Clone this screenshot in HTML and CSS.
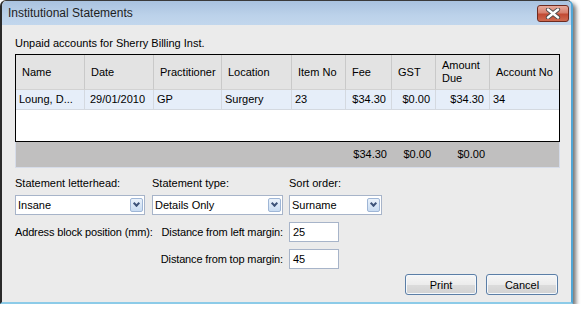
FILE: index.html
```html
<!DOCTYPE html>
<html lang="en">
<head>
  <meta charset="UTF-8">
  <meta name="viewport" content="width=device-width, initial-scale=1.0">
  <title>Institutional Statements</title>
  <link rel="stylesheet" href="styles.css">
</head>
<body>
<div class="window">
  <div class="titlebar">
    <span class="title">Institutional Statements</span>
    <button class="close">
      <svg width="16" height="11" viewBox="0 0 16 11">
        <path d="M3 1.5 L13 9.5 M13 1.5 L3 9.5" stroke="#4a4a4a" stroke-width="4.2" stroke-linecap="round"/>
        <path d="M3 1.5 L13 9.5 M13 1.5 L3 9.5" stroke="#ffffff" stroke-width="2.4" stroke-linecap="round"/>
      </svg>
    </button>
  </div>

  <div class="content">
    <div class="caption">Unpaid accounts for Sherry Billing Inst.</div>

    <div class="grid-frame">
      <div class="grid">
        <div class="row head">
          <div class="cell">Name</div>
          <div class="cell">Date</div>
          <div class="cell">Practitioner</div>
          <div class="cell">Location</div>
          <div class="cell">Item No</div>
          <div class="cell">Fee</div>
          <div class="cell">GST</div>
          <div class="cell">Amount Due</div>
          <div class="cell">Account No</div>
        </div>
        <div class="row data">
          <div class="cell">Loung, D...</div>
          <div class="cell">29/01/2010</div>
          <div class="cell">GP</div>
          <div class="cell">Surgery</div>
          <div class="cell">23</div>
          <div class="cell num">$34.30</div>
          <div class="cell num">$0.00</div>
          <div class="cell num">$34.30</div>
          <div class="cell">34</div>
        </div>
      </div>
      <div class="row totals">
        <div class="cell"></div>
        <div class="cell"></div>
        <div class="cell"></div>
        <div class="cell"></div>
        <div class="cell"></div>
        <div class="cell num">$34.30</div>
        <div class="cell num">$0.00</div>
        <div class="cell num">$0.00</div>
        <div class="cell"></div>
      </div>
    </div>

    <div class="choices">
      <div class="field f1">
        <label>Statement letterhead:</label>
        <div class="combo w1"><span>Insane</span><i class="drop"></i></div>
      </div>
      <div class="field f2">
        <label>Statement type:</label>
        <div class="combo w2"><span>Details Only</span><i class="drop"></i></div>
      </div>
      <div class="field f3">
        <label>Sort order:</label>
        <div class="combo w3"><span>Surname</span><i class="drop"></i></div>
      </div>
    </div>

    <div class="margins">
      <span class="lbl">Address block position (mm):</span>
      <span class="lbl right">Distance from left margin:</span>
      <div class="edit">25</div>
      <span></span>
      <span class="lbl right">Distance from top margin:</span>
      <div class="edit">45</div>
    </div>

    <div class="actions">
      <button class="btn">Print</button>
      <button class="btn">Cancel</button>
    </div>
  </div>
</div>
</body>
</html>
```

FILE: styles.css
```css
body {
  margin: 0;
  padding: 0;
  background: #ffffff;
  font-family: "Liberation Sans", Arial, sans-serif;
  font-size: 11px;
  color: #000;
}
.window {
  width: 569px;
  height: 301px;
  background: #ebebeb;
  border-left: 2px solid #2a2a2a;
  border-top: 1px solid #3a3a3a;
  border-right: 2px solid #4fa6d6;
  border-bottom: 2px solid #8ccbe8;
  border-radius: 6px 6px 0 0;
  box-shadow: 3px 3px 4px rgba(0,0,0,0.55);
}
.titlebar {
  height: 24px;
  display: flex;
  align-items: center;
  justify-content: space-between;
  padding: 0 2px 0 6px;
  background: linear-gradient(#a9c2df, #bcd2ea 60%, #c2d7ed);
  border-radius: 5px 5px 0 0;
}
.title {
  font-family: "Liberation Sans", Arial, sans-serif;
  font-size: 12px;
  color: #1e1e1e;
}
.close {
  width: 32px;
  height: 17px;
  margin-top: 1px;
  padding: 0;
  border: 1px solid #6e2b20;
  border-radius: 3px;
  background: linear-gradient(#e7aa9c, #d7806d 45%, #c24a33 55%, #cf6a4f);
  display: flex;
  align-items: center;
  justify-content: center;
}
.content {
  padding: 11px 10px 0 13px;
}
.caption { height: 14px; line-height: 14px; margin-bottom: 4px; }

.grid-frame { width: 545px; }
.grid {
  border: 1px solid #000;
  background: #fff;
  height: 86px;
}
.row {
  display: grid;
  grid-template-columns: 69px 69px 68px 70px 54px 46px 44px 54px 69px;
}
.head { height: 35px; background: #e3e3e3; }
.head .cell {
  border-right: 1px solid #c9c9c9;
  border-bottom: 1px solid #d2d2d2;
  padding: 0 4px 0 6px;
  display: flex;
  align-items: center;
  line-height: 13px;
}
.head .cell:last-child { border-right: none; }
.data { height: 20px; background: #e6eef9; }
.data .cell {
  border-right: 1px solid #d4d9e0;
  border-bottom: 1px solid #d4d9e0;
  padding: 0 4px 0 3px;
  line-height: 19px;
  white-space: nowrap;
}
.data .cell:nth-child(2) { padding-left: 5px; }
.data .cell:last-child { border-right: none; }
.cell.num { text-align: right; padding-right: 5px; }
.totals {
  height: 25px;
  background: #c0bfbf;
  border: 1px solid #d6dce9;
  border-top: none;
  width: 543px;
}
.totals .cell { line-height: 25px; }

.choices { display: flex; margin-top: 8px; }
.field label { display: block; height: 14px; line-height: 14px; margin-bottom: 5px; }
.f1 { width: 137px; }
.f2 { width: 137px; }
.combo {
  height: 18px;
  border: 1px solid #a7b4c9;
  background: #fff;
  display: flex;
  align-items: center;
  justify-content: space-between;
  padding: 0 1px 0 2px;
}
.w1 { width: 125px; }
.w2 { width: 126px; }
.w3 { width: 88px; }
.drop {
  width: 13px;
  height: 14px;
  box-sizing: border-box;
  border: 1px solid #9fb6d6;
  border-radius: 2px;
  background: linear-gradient(#eaf2fb, #c9dcf2);
  position: relative;
}
.drop::after {
  content: "";
  position: absolute;
  left: 3px;
  top: 2px;
  width: 3px;
  height: 3px;
  border-right: 2px solid #3d5379;
  border-bottom: 2px solid #3d5379;
  transform: rotate(45deg);
}

.margins {
  display: grid;
  grid-template-columns: 134px 128px 50px;
  grid-auto-rows: 20px;
  column-gap: 6px;
  row-gap: 7px;
  margin-top: 7px;
  align-items: center;
}
.lbl { white-space: nowrap; letter-spacing: -0.15px; }
.right { text-align: right; }
.edit {
  height: 18px;
  border: 1px solid #a7b4c9;
  background: #fff;
  line-height: 18px;
  padding-left: 3px;
}

.actions {
  display: flex;
  justify-content: flex-end;
  gap: 9px;
  margin-top: 5px;
  width: 543px;
}
.btn {
  width: 72px;
  height: 21px;
  font-family: "Liberation Sans", Arial, sans-serif;
  font-size: 11px;
  border: 1px solid #5b7ea6;
  border-radius: 3px;
  background: linear-gradient(#f6f6f6, #ececec 50%, #dcdcdc 51%, #d2d2d2);
  box-shadow: inset 0 0 0 1px #f4f8fc;
  padding: 0;
  color: #000;
}
```
